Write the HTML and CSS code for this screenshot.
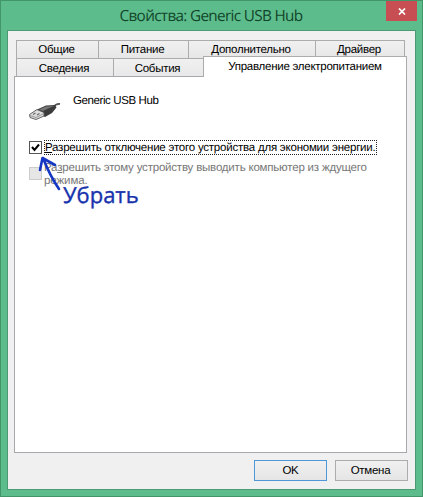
FILE: index.html
```
<!DOCTYPE html>
<html lang="ru">
<head>
<meta charset="utf-8">
<title>Свойства: Generic USB Hub</title>
<link rel="stylesheet" href="styles.css">
</head>
<body>
<div class="window">
  <header class="titlebar">
    <h1 class="title">Свойства: Generic USB Hub</h1>
    <button class="close" aria-label="Закрыть"><svg width="8" height="7" viewBox="0 0 8 7"><path d="M1 .5 7 6.5M7 .5 1 6.5" stroke="#fff" stroke-width="1.7"/></svg></button>
  </header>
  <main class="client">
    <nav class="tabs">
      <div class="row row-back">
        <span class="tab">Общие</span>
        <span class="tab">Питание</span>
        <span class="tab">Дополнительно</span>
        <span class="tab">Драйвер</span>
      </div>
      <div class="row row-front">
        <span class="tab">Сведения</span>
        <span class="tab">События</span>
        <span class="tab active">Управление электропитанием</span>
      </div>
    </nav>
    <section class="panel">
      <div class="device">
        <svg class="usb" width="36" height="24" viewBox="0 0 36 24">
          <path d="M25 7.500Q28 3.500 32 4" fill="none" stroke="#555" stroke-width="1.800"/>
          <path d="M9 9.500 18 5.500 27 5 28.500 7.500 24 13 17 17 13 15Z" fill="#3c3c3c"/>
          <path d="M11 9.500 18 6.500 26 6 20 8.500 15 11Z" fill="#777"/>
          <path d="M1.500 14.500 9 9.500 16 12.500 16 16 8 19.500 2 17.500Z" fill="#ddd" stroke="#555" stroke-width=".9"/>
          <path d="M2 15.500 8 17.500 16 13.500" fill="none" stroke="#888" stroke-width=".8"/>
          <path d="M5 14.500 7.500 13M9 15 11.500 13.500" stroke="#666" stroke-width="1.200"/>
        </svg>
        <span class="name">Generic USB Hub</span>
      </div>
      <div class="option">
        <span class="box"><svg width="11" height="11" viewBox="0 0 11 11"><path d="M2 5 4.500 8 9 2.500" fill="none" stroke="#000" stroke-width="2"/></svg></span>
        <span class="focus"><u>Р</u>азрешить отключение этого устройства для экономии энергии.</span>
      </div>
      <div class="option disabled">
        <span class="box"></span>
        <span class="label-off">Ра<u>з</u>решить этому устройству выводить компьютер из ждущего<br><span class="wide">режима.</span></span>
      </div>
    </section>
    <footer class="actions">
      <button class="btn primary">OK</button>
      <button class="btn">Отмена</button>
    </footer>
  </main>
  <svg class="arrow" width="26" height="40" viewBox="0 0 26 40"><path d="M22 36Q13 23 6 5M3 17 5.500 5 18 12" fill="none" stroke="#1636c4" stroke-width="2.600" stroke-linecap="round" stroke-linejoin="round"/></svg>
  <span class="note">Убрать</span>
</div>
</body>
</html>
```
FILE: styles.css
```
* { box-sizing: border-box; }
body { margin: 0; }
.window {
  position: relative;
  display: flex;
  flex-direction: column;
  width: 423px;
  height: 497px;
  padding: 0 6px 6px;
  border: 1px solid #429469;
  background: #5dbc8c;
  font: 11.5px/15px "Liberation Sans", sans-serif;
  letter-spacing: -.26px;
  text-rendering: geometricPrecision;
  color: #000;
}
.titlebar {
  display: flex;
  justify-content: center;
  position: relative;
  height: 29px;
  flex: none;
}
.title {
  margin: 4px 1px 0 0;
  font: 15.3px/23px "Open Sans", sans-serif;
  letter-spacing: -.67px;
  color: #114529;
  white-space: nowrap;
}
.close {
  position: absolute;
  right: -1px;
  top: 0;
  display: flex;
  align-items: center;
  justify-content: center;
  width: 31px;
  height: 20px;
  padding: 0;
  border: 0;
  background: #c74f54;
}
.client {
  flex: 1;
  display: flex;
  flex-direction: column;
  padding: 9px 8px 7px 6px;
  border: 1px solid #4c9a73;
  background: #f0f0f0;
}
.tabs { padding: 0 1px 0 2px; flex: none; }
.row { display: grid; height: 18px; }
.row-back { grid-template-columns: 82px 90px 127px 90px; }
.row-front { grid-template-columns: 97px 90px 204px; }
.tab {
  display: flex;
  align-items: center;
  justify-content: center;
  padding: 2px 2px 0 0;
  border: 1px solid #acacac;
  border-bottom: 0;
  border-right: 0;
  background: linear-gradient(#f0f0f0, #e7e7e7);
  white-space: nowrap;
}
.row-back .tab:last-child { border-right: 1px solid #acacac; }
.active {
  position: relative;
  height: 21px;
  margin-top: -2px;
  padding: 0;
  background: #fff;
  border-right: 1px solid #acacac;
}
.panel {
  height: 377px;
  flex: none;
  padding: 15px 0 0 14px;
  border: 1px solid #a8a8ac;
  background: #fff;
}
.device { display: flex; height: 48px; }
.usb { margin: 8px 9px 0 -1px; }
.name { margin-top: 2px; letter-spacing: -.4px; white-space: nowrap; }
.option { display: flex; height: 20px; white-space: nowrap; }
.box {
  flex: none;
  width: 13px;
  height: 13px;
  margin-top: 1px;
  border: 1px solid #555;
}
.box svg { display: block; }
.focus { width: 333px; height: 15px; margin-left: 2px; border: 1px dotted #222; line-height: 15px; letter-spacing: -.22px; }
.disabled { color: #777; margin-top: 1px; }
.disabled .box { margin-top: 6px; border-color: #ccc; background: #e6e6e6; }
.label-off { margin: 1px 0 0 2px; line-height: 13px; letter-spacing: -.2px; }
.wide { letter-spacing: -.1px; }
.actions { display: flex; justify-content: flex-end; gap: 8px; margin: 7px -1px 0 0; }
.btn {
  width: 73px;
  height: 21px;
  padding: 0;
  border: 1px solid #acacac;
  background: linear-gradient(#f0f0f0, #e5e5e5);
  font: inherit;
  letter-spacing: inherit;
  color: inherit;
}
.btn:last-child { padding-right: 2px; }
.primary { border-color: #4f97d8; }
.arrow { position: absolute; left: 36px; top: 152px; }
.note { position: absolute; left: 62px; top: 179px; font: 500 22px/30px "Open Sans", sans-serif; letter-spacing: 0; color: #1733ad; -webkit-text-stroke: .35px #1733ad; }
```
